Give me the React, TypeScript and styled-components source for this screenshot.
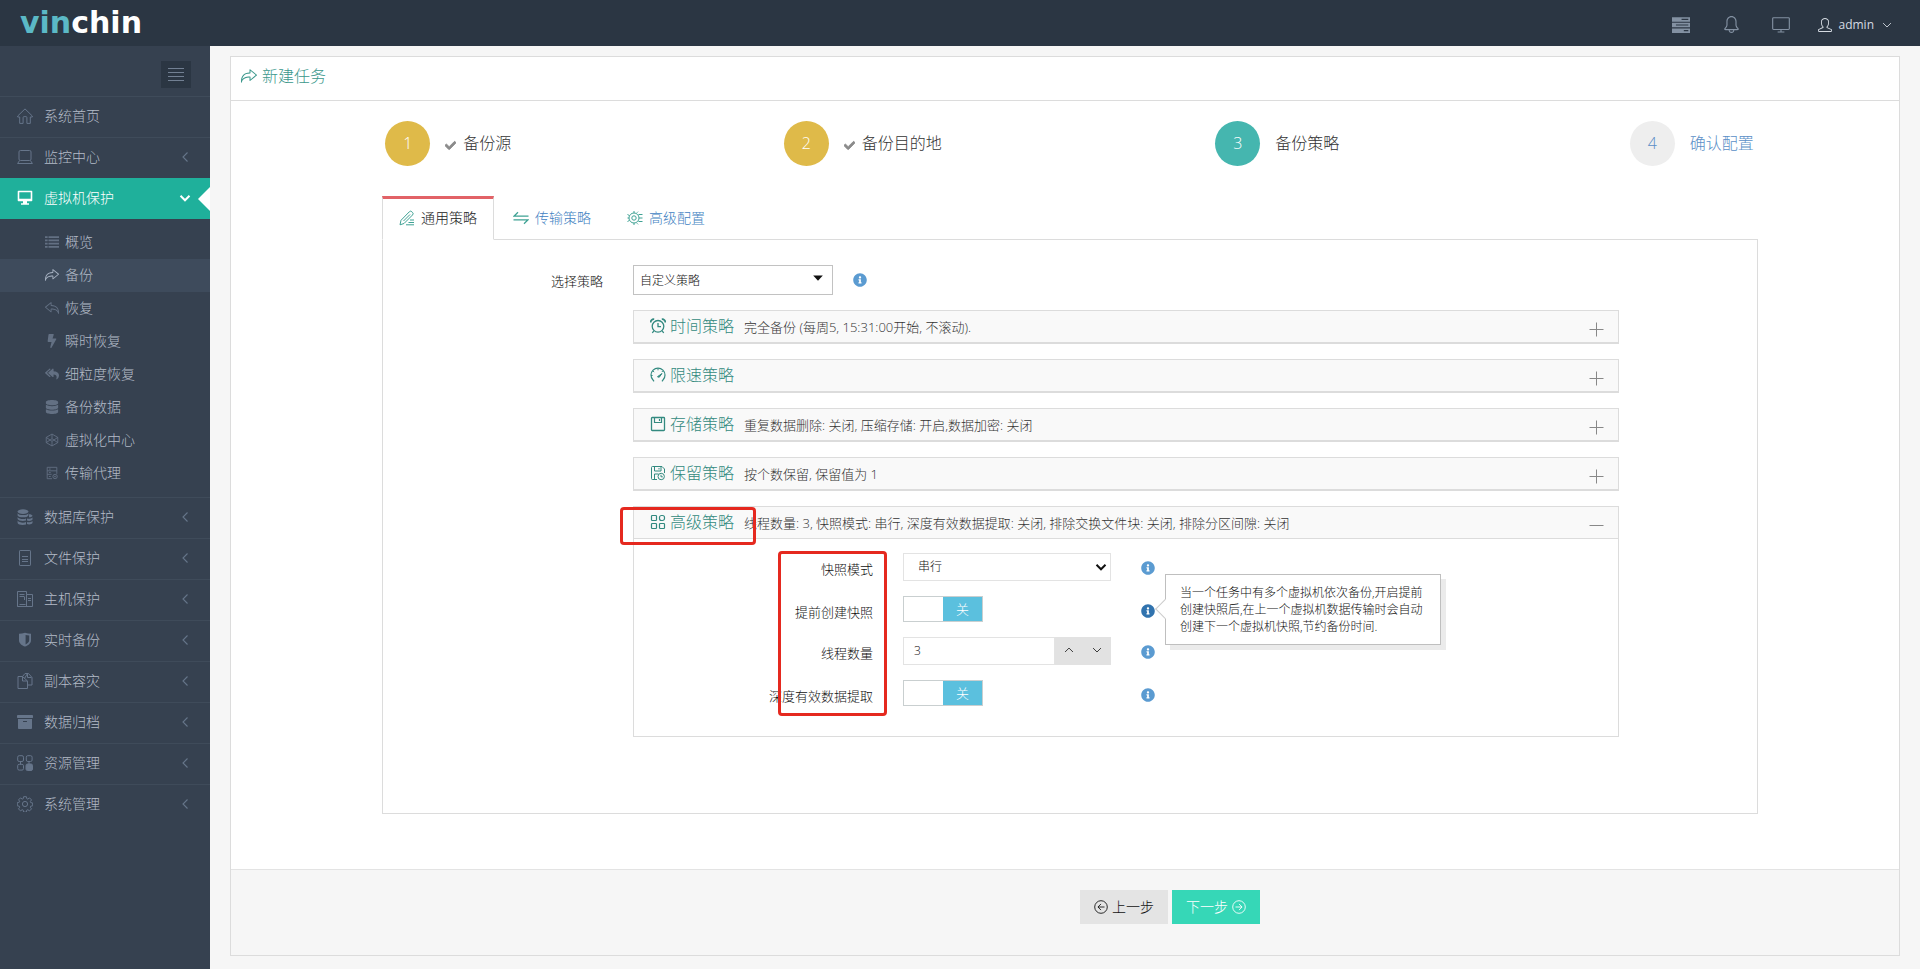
import React from 'react';
import styled, { createGlobalStyle, css } from 'styled-components';
import { FaArchive, FaBolt, FaCheck, FaDatabase, FaInfoCircle, FaReplyAll } from 'react-icons/fa';
import { SlActionRedo, SlActionUndo, SlBell, SlUser } from 'react-icons/sl';

const GlobalStyle = createGlobalStyle`
  *, *::before, *::after { box-sizing: border-box; }
  body {
    margin: 0;
    background: #f6f6f6;
    color: #111;
    font-family: "Open Sans", "Noto Sans CJK SC", sans-serif;
    font-size: 13px;
    line-height: 20px;
    font-weight: 300;
  }
  a { color: inherit; text-decoration: none; }
  button, input, select { font: inherit; color: inherit; margin: 0; border-radius: 0; }
  button { cursor: pointer; }
  ul, ol { list-style: none; margin: 0; padding: 0; }
  h1, h2, p { margin: 0; font-weight: inherit; }
`;

/* ---------- icons ---------- */

const Svg = styled.svg<{ $size?: number; $bold?: boolean }>`
  display: block;
  flex: none;
  width: ${(p) => p.$size ?? 16}px;
  height: ${(p) => p.$size ?? 16}px;
  fill: none;
  stroke: currentColor;
  stroke-width: ${(p) => (p.$bold ? 2 : 1)};
`;

const shapes = {
  menu: <path d="M0 1.5h16M0 5.5h16M0 9.5h16M0 13.5h16" />,
  list: <path d="M0 2.5h3M4 2.5h12M0 6.2h3M4 6.2h12M0 9.900h3M4 9.900h12M0 13.600h3M4 13.600h12" strokeWidth="2" />,
  home: <path d="M.7 8 8 .9 15.3 8v1h-2v6.4h-3.400V9.600a1 1 0 0 0-1-1H7.100a1 1 0 0 0-1 1v5.800H2.700V9h-2z" strokeLinejoin="round" />,
  laptop: (
    <>
      <rect x="2" y="1.5" width="12" height="10" rx="1.4" />
      <path d="M2.6 11.5.6 14.5h14.8l-2-3" />
    </>
  ),
  monitor: (
    <path
      d="M1.5.8h13c.5 0 .8.3.8.8v8.8c0 .5-.3.8-.8.8H10v2h2v1.6H4v-1.6h2v-2H1.5c-.5 0-.8-.3-.8-.8V1.600C.7 1.100 1 .8 1.500.8zM2.300 2.300v6.400h11.400V2.300z"
      fill="currentColor"
      fillRule="evenodd"
      stroke="none"
    />
  ),
  cube: (
    <>
      <path d="M8 1.2 14.6 5v6L8 14.800 1.400 11V5z" />
      <path d="M1.400 5 8 9.500 14.600 5M1.400 11 8 6.500l6.600 4.500M8 1.200v5.300M8 9.500v5.300" />
    </>
  ),
  agent: (
    <>
      <path d="M8 14.500H2.500v-13h11v7.500M2.500 5.500h11M2.500 9.500h5M4.500 3.500h2M4.500 7.500h2M4.500 12h2" />
      <circle cx="11.500" cy="12" r="2.500" />
      <circle cx="11.500" cy="12" r=".6" />
    </>
  ),
  databases: (
    <g fill="currentColor" stroke="none">
      <ellipse cx="6" cy="2.600" rx="5.400" ry="2.400" />
      <path d="M.6 4.200c1 2.500 9.800 2.500 10.800 0v2.200c-1 2.500-9.800 2.500-10.800 0zM.6 7.900c1 2.200 6.400 2.500 8.400 1.500v2.200c-2.800.9-7.700.4-8.400-1.500zM.6 11.600c1 2.200 6.400 2.500 8.400 1.500v2.300c-2.800.9-7.700.6-8.400-1.500z" />
      <path d="M12 5.300c1.800 0 3.500.6 3.500 1.500S14 8.300 12 8.300zM10 9.500c2 .6 5 .2 5.500-1.200v2.200c-.5 1.400-3.500 1.700-5.500 1.100zM10 13c2 .6 5 .2 5.500-1.200V14c-.5 1.400-3.500 1.700-5.500 1.100z" />
    </g>
  ),
  file: (
    <>
      <rect x="2.500" y=".5" width="11" height="15" rx=".6" />
      <path d="M5 6.500h6M5 9.500h6M5 11.500h6" />
    </>
  ),
  host: (
    <>
      <path d="M9.500 15.500h-9V.5h9v3M.5 15.500h15v-12h-6M2.500 3.500h5M2.500 5.500h5M2.500 13.500h6M9.500 3.500v12M11 7.500h3M11 9.500h3" />
      <path d="M7.500 6v3" />
    </>
  ),
  shield: (
    <path
      d="M8 .8c2 .6 4 1 6 1v6.400c0 3.200-2.800 5.200-6 6.400-3.200-1.200-6-3.200-6-6.400V1.800c2 0 4-.4 6-1zM8.600 3v9.400c2.200-1 3.600-2.400 3.600-4.400V3.400c-1.200 0-2.400-.1-3.600-.4z"
      fill="currentColor"
      fillRule="evenodd"
      stroke="none"
    />
  ),
  copy: <path d="M5.500 3.500 8 .5h3.500l3.500 4v7.500h-4.500M1 3.500h4.500L10.500 8v7.500H1zM5.500 3.500V8h5M7.500 5.500l3-5v4h4" />,
  grid: (
    <>
      <rect x=".7" y=".7" width="5.800" height="5.800" rx="1.500" />
      <rect x="9.300" y=".7" width="5.800" height="5.800" rx="1.500" />
      <rect x=".7" y="9.300" width="5.800" height="5.800" rx="1.500" />
      <rect x="9" y="9" width="6.500" height="6.500" rx="1.500" fill="currentColor" />
      <path d="M3.500 6.500v3M12 6.500v3" />
    </>
  ),
  gear: (
    <>
      <path d="M6.600.7h2.800l.4 2 1 .4 1.700-1.200 2 2-1.200 1.700.4 1 2 .4v2.800l-2 .4-.4 1 1.200 1.700-2 2-1.700-1.200-1 .4-.4 2H6.600l-.4-2-1-.4-1.700 1.200-2-2 1.200-1.700-.4-1-2-.4V6.600l2-.4.4-1L1.500 3.900l2-2 1.700 1.200 1-.4z" strokeLinejoin="round" />
      <circle cx="8" cy="8" r="2.600" />
    </>
  ),
  server: (
    <>
      <path d="M0 1h16v4H0zM0 6h16v4H0zM0 11h16v4H0z" fill="currentColor" stroke="none" />
      <path d="M8.500 3h6M3.500 8h11M10.500 13h4" stroke="#2b3643" />
    </>
  ),
  screen: (
    <>
      <rect x=".6" y="1.500" width="14.800" height="10.500" rx=".8" />
      <path d="M8 12v2M5 14.200h6" />
    </>
  ),
  pencil: (
    <path
      d="M1 14.800l1-4.500L10.300 1.800a1.800 1.800 0 0 1 2.600 0l.6.6a1.800 1.800 0 0 1 0 2.600L5 13.500 1 14.800M4.500 11 11 4.500M11 10h4M9.500 12.500H15M7 14.800h8"
      strokeLinejoin="round"
    />
  ),
  transfer: <path d="M15.500 6.200H1L5 2.300M.5 9.800H15l-4 3.900" strokeWidth="1.200" />,
  config: (
    <>
      <circle cx="7" cy="8" r="5" />
      <circle cx="7" cy="8" r="2.200" />
      <path d="M7 1v2M7 13v2M.5 4.500l1.800 1M.5 11.500l1.800-1M.5 8H2M10 2.700l1-1M10 13.300l1 1M11.500 4.500h4M12 8h3.500M11.500 11.500h4" />
    </>
  ),
  clock: (
    <>
      <circle cx="8" cy="8.300" r="5.800" strokeWidth="1.300" />
      <path d="M8 5v3.600h3M3.800 12.800 2.300 15M12.200 12.800l1.500 2.200" strokeWidth="1.300" />
      <path d="M.6 4.500C.6 2.500 2 1 4.200 1.200M15.400 4.500c0-2-1.400-3.500-3.600-3.300" strokeWidth="1.800" />
    </>
  ),
  speed: (
    <>
      <path d="M4 14.300 3 13A7 7 0 1 1 13 13l-1 1.300" strokeWidth="1.200" />
      <path d="M8 1.500v1.800M3 4l1.200 1M1 8.500h1.600M12.800 4l-1 1" />
      <path d="M7.500 9.700 12 6.500 9.200 10.300z" fill="currentColor" />
    </>
  ),
  disk: (
    <>
      <rect x="1.500" y="1.500" width="13" height="13" rx=".8" strokeWidth="1.300" />
      <path d="M4.500 1.500v5h7v-5M9.500 3v2" strokeWidth="1.200" />
    </>
  ),
  diskClock: (
    <>
      <path d="M7 14.500H2.500a1 1 0 0 1-1-1v-11a1 1 0 0 1 1-1H12L14.500 4v4M4.500 1.500v4.500h6.500V1.500M9 3v1.500M4.500 14.500V9h4" />
      <circle cx="11.200" cy="11.500" r="3.200" />
      <path d="M11 9.800v2h1.800" />
    </>
  ),
  apps: (
    <>
      <rect x="1.500" y="1.500" width="5" height="5" rx=".8" strokeWidth="1.200" />
      <rect x="9.500" y="1.500" width="5" height="5" rx="2" strokeWidth="1.200" />
      <rect x="1.500" y="9.500" width="5" height="5" rx=".8" strokeWidth="1.200" />
      <rect x="9.500" y="9.500" width="5" height="5" rx=".8" strokeWidth="1.200" />
    </>
  ),
  plus: <path d="M1.500 8.500h14M8.500 1.500v14" />,
  minus: <path d="M1.500 8.500h14" />,
  left: <path d="M10.500 3.500 6 8l4.500 4.500" strokeWidth="1.100" />,
  down: <path d="M3.500 5.800 8 10.300l4.500-4.500" />,
  up: <path d="M3.500 10.300 8 5.800l4.500 4.500" />,
  caret: <path d="M2.500 5h11L8 11z" fill="currentColor" stroke="none" />,
  backCircle: (
    <>
      <circle cx="8" cy="8" r="7.200" />
      <path d="M12 8H4.500M8 4.500 4.500 8 8 11.500" />
    </>
  ),
  nextCircle: (
    <>
      <circle cx="8" cy="8" r="7.200" />
      <path d="M4 8h7.500M8 4.500 11.500 8 8 11.500" />
    </>
  ),
};

type IconName = keyof typeof shapes;

const Icon = ({ name, size, bold }: { name: IconName; size?: number; bold?: boolean }) => (
  <Svg $size={size} $bold={bold} viewBox="0 0 16 16" aria-hidden="true">
    {shapes[name]}
  </Svg>
);

/* ---------- header ---------- */

const Page = styled.div`
  display: flex;
  flex-direction: column;
  min-height: 100vh;
`;

const Header = styled.header`
  display: flex;
  align-items: center;
  justify-content: space-between;
  height: 46px;
  padding: 0 26px 0 20px;
  background: #2b3643;
`;

const Logo = styled.a`
  font: 700 30px/46px "DejaVu Sans", sans-serif;
  color: #fff;
  span { color: #5bb9c6; }
`;

const HeaderActions = styled.div`
  display: flex;
  align-items: center;
  gap: 28px;
  padding-top: 3px;
`;

const HeaderIcons = styled.div`
  display: flex;
  gap: 32px;
`;

const HeaderButton = styled.button`
  display: flex;
  justify-content: center;
  width: 18px;
  padding: 0;
  border: 0;
  background: none;
  color: #8391a2;
`;

const UserButton = styled.button`
  display: flex;
  align-items: center;
  gap: 6px;
  padding: 0;
  border: 0;
  background: none;
  color: #d5dbe2;
  font-size: 12px;
  font-weight: 400;
`;

/* ---------- sidebar ---------- */

const Main = styled.div`
  display: flex;
  flex: 1;
`;

const Sidebar = styled.nav`
  flex: none;
  width: 210px;
  background: #364150;
  color: #b4bcc8;
`;

const SidebarTop = styled.div`
  display: flex;
  justify-content: flex-end;
  height: 50px;
  padding: 15px 19px 0 0;
`;

const Toggler = styled.button`
  display: grid;
  place-items: center;
  width: 30px;
  height: 27px;
  padding: 0;
  border: 0;
  background: #2b3643;
  color: #728093;
`;

const MenuLink = styled.a<{ $active?: boolean }>`
  position: relative;
  display: flex;
  align-items: center;
  height: 41px;
  padding: 0 17px 2px;
  border-top: 1px solid #3f4b5a;
  font-size: 14px;
  color: ${(p) => (p.$active ? '#fff' : '#b4bcc8')};
  > svg { color: ${(p) => (p.$active ? '#fff' : '#66758a')}; }
  > svg:first-child { margin-right: 11px; }
  > span { flex: 1; }
  ${(p) =>
    p.$active &&
    css`
      background: #1fb09b;
      border-color: #1fb09b;
      &::after {
        content: '';
        position: absolute;
        right: 0;
        top: 8px;
        border: solid transparent;
        border-width: 12px 12px 12px 0;
        border-right-color: #fff;
      }
    `}
`;

const SubMenu = styled.ul`
  padding: 7px 0;
`;

const SubLink = styled.a<{ $active?: boolean }>`
  display: flex;
  align-items: center;
  gap: 6px;
  height: 33px;
  padding: 0 0 2px 45px;
  font-size: 14px;
  background: ${(p) => (p.$active ? '#3e4b5c' : 'transparent')};
  > svg { flex: none; width: 14px; height: 14px; color: ${(p) => (p.$active ? '#a7b2c2' : '#637083')}; }
`;

const menuTop: { icon: IconName; label: string; leaf?: boolean; active?: boolean }[] = [
  { icon: 'home', label: '系统首页', leaf: true },
  { icon: 'laptop', label: '监控中心' },
  { icon: 'monitor', label: '虚拟机保护', active: true },
];

const subMenu = [
  { icon: <Icon name="list" />, label: '概览' },
  { icon: <SlActionRedo />, label: '备份', active: true },
  { icon: <SlActionUndo />, label: '恢复' },
  { icon: <FaBolt />, label: '瞬时恢复' },
  { icon: <FaReplyAll />, label: '细粒度恢复' },
  { icon: <FaDatabase />, label: '备份数据' },
  { icon: <Icon name="cube" />, label: '虚拟化中心' },
  { icon: <Icon name="agent" />, label: '传输代理' },
];

const menuBottom: { icon: IconName | 'archive'; label: string }[] = [
  { icon: 'databases', label: '数据库保护' },
  { icon: 'file', label: '文件保护' },
  { icon: 'host', label: '主机保护' },
  { icon: 'shield', label: '实时备份' },
  { icon: 'copy', label: '副本容灾' },
  { icon: 'archive', label: '数据归档' },
  { icon: 'grid', label: '资源管理' },
  { icon: 'gear', label: '系统管理' },
];

/* ---------- card and wizard steps ---------- */

const Content = styled.main`
  flex: 1;
  min-width: 0;
  padding: 10px 20px 12px;
`;

const Card = styled.section`
  border: 1px solid #dcdcdc;
  background: #fff;
`;

const CardTitle = styled.h1`
  display: flex;
  align-items: center;
  gap: 5px;
  height: 44px;
  padding: 0 10px 6px;
  border-bottom: 1px solid #dcdcdc;
  font-size: 16px;
  color: #3a978b;
`;

const Steps = styled.ol`
  display: flex;
  padding: 20px 0 30px 10px;
`;

type StepState = 'done' | 'active' | 'todo';

const Step = styled.li<{ $state: StepState }>`
  display: flex;
  flex: 1;
  align-items: center;
  justify-content: center;
  gap: 15px;
  font-size: 16px;
  color: ${(p) => (p.$state === 'todo' ? '#5b8fc7' : '#333')};
`;

const StepNumber = styled.span<{ $state: StepState }>`
  display: grid;
  place-items: center;
  width: 45px;
  height: 45px;
  padding-bottom: 1px;
  border-radius: 50%;
  color: ${(p) => (p.$state === 'todo' ? '#5b8fc7' : '#fff')};
  background: ${(p) => ({ done: '#dfba49', active: '#45b6af', todo: '#eee' })[p.$state]};
`;

const StepLabel = styled.span`
  display: flex;
  align-items: center;
  gap: 7px;
  padding-bottom: 1px;
  svg { width: 11px; height: 11px; margin-top: 4px; color: #8b8b8b; stroke: #8b8b8b; stroke-width: 40px; }
`;

const steps: { label: string; state: StepState }[] = [
  { label: '备份源', state: 'done' },
  { label: '备份目的地', state: 'done' },
  { label: '备份策略', state: 'active' },
  { label: '确认配置', state: 'todo' },
];

/* ---------- tabs ---------- */

const Tabbed = styled.div`
  padding: 0 141px 55px 151px;
`;

const Tabs = styled.div`
  position: relative;
  z-index: 1;
  display: flex;
  gap: 2px;
  margin-bottom: -1px;
`;

const Tab = styled.button<{ $active?: boolean }>`
  display: flex;
  align-items: center;
  justify-content: center;
  gap: 6px;
  min-width: 112px;
  height: 44px;
  padding: 0 16px 2px;
  border: 1px solid transparent;
  border-top-width: 3px;
  background: none;
  font-size: 14px;
  color: #3f82c2;
  svg { color: #3fa294; }
  ${(p) =>
    p.$active &&
    css`
      border-color: #e26267 #dcdcdc transparent;
      background: #fff;
      color: #222;
    `}
`;

const Pane = styled.div`
  display: grid;
  grid-template-columns: 220px 1fr;
  gap: 15px 30px;
  padding: 25px 138px 76px 0;
  border: 1px solid #dcdcdc;
`;

const FieldLabel = styled.label`
  padding-top: 6px;
  text-align: right;
`;

const Inline = styled.div`
  display: flex;
  gap: 20px;
`;

const SelectBox = styled.div<{ $dark?: boolean }>`
  position: relative;
  width: ${(p) => (p.$dark ? 200 : 208)}px;
  select {
    display: block;
    width: 100%;
    height: ${(p) => (p.$dark ? 30 : 28)}px;
    padding: ${(p) => (p.$dark ? '2px 20px 0 6px' : '0 20px 0 14px')};
    border: 1px solid ${(p) => (p.$dark ? '#c2c2c2' : '#e3e3e3')};
    background: #fff;
    font-size: 12px;
    appearance: none;
  }
  svg {
    position: absolute;
    right: ${(p) => (p.$dark ? 8 : 2)}px;
    top: 6px;
    color: #111;
    pointer-events: none;
  }
`;

const InfoButton = styled.button<{ $hot?: boolean }>`
  display: flex;
  width: 14px;
  height: 14px;
  padding: 0;
  border: 0;
  background: none;
  color: ${(p) => (p.$hot ? '#3173ae' : '#5b9bd1')};
  svg { width: 14px; height: 14px; }
`;

const InfoSlot = styled.div`
  position: relative;
  padding-top: 8px;
`;

/* ---------- strategy panels ---------- */

const Panels = styled.div`
  grid-column: 2;
  display: flex;
  flex-direction: column;
  gap: 15px;
`;

const Panel = styled.section`
  position: relative;
  border: 1px solid #dcdcdc;
`;

const PanelHeader = styled.button`
  display: flex;
  align-items: center;
  width: 100%;
  height: 32px;
  padding: 0 14px 0 16px;
  border: 0;
  border-bottom: 1px solid #dcdcdc;
  background: #f9f9f9;
  text-align: left;
  > svg { color: #888; margin-top: 5px; }
`;

const PanelTitle = styled.h2`
  display: flex;
  align-items: center;
  gap: 4px;
  padding-bottom: 2px;
  font-size: 16px;
  color: #338a80;
`;

const PanelSummary = styled.p`
  flex: 1;
  padding-left: 10px;
  color: #333;
`;

const PanelBody = styled.div`
  display: flex;
  flex-direction: column;
  gap: 15px;
  padding: 14px 0 30px;
`;

const Row = styled.div`
  display: grid;
  grid-template-columns: 239px 208px auto;
  gap: 30px;
`;

const Switch = styled.span`
  position: relative;
  display: grid;
  grid-template-columns: 1fr 1fr;
  width: 80px;
  height: 26px;
  border: 1px solid #c9cfd0;
  background: #fff;
  input { position: absolute; inset: 0; width: 100%; height: 100%; margin: 0; opacity: 0; cursor: pointer; }
  span { grid-column: 2; background: #5bc0de; color: #fff; text-align: center; line-height: 24px; }
`;

const Spinner = styled.div`
  display: flex;
  height: 28px;
  input { flex: 1; min-width: 0; padding: 0 10px; border: 1px solid #e3e3e3; background: #fff; font-size: 12px; }
  button { display: grid; place-items: center; width: 28px; padding: 0 0 2px; border: 0; background: #e2e2e2; color: #222; }
`;

const Tooltip = styled.div`
  position: absolute;
  z-index: 2;
  left: 24px;
  top: -22px;
  width: 276px;
  padding: 9px 14px;
  border: 1px solid #bfbfbf;
  background: #fff;
  box-shadow: 5px 5px #ebebeb;
  font-size: 12px;
  line-height: 17px;
  &::before {
    content: '';
    position: absolute;
    left: -8px;
    top: 27px;
    width: 14px;
    height: 14px;
    border: solid #ccc;
    border-width: 0 0 1px 1px;
    background: #fff;
    transform: rotate(45deg);
  }
  span { position: relative; display: block; white-space: pre; }
`;

const Marker = styled.div<{ $kind: 'title' | 'labels' }>`
  position: absolute;
  z-index: 3;
  border: 3px solid #e5291f;
  border-radius: 4px;
  pointer-events: none;
  ${(p) =>
    p.$kind === 'title'
      ? css`left: -14px; top: 0; width: 136px; height: 38px;`
      : css`left: 144px; top: 44px; width: 109px; height: 165px;`}
`;

const Actions = styled.footer`
  display: flex;
  gap: 4px;
  height: 86px;
  padding: 20px 0 0 calc(50% + 15px);
  border-top: 1px solid #e3e3e3;
  background: #f6f6f6;
`;

const ActionButton = styled.button<{ $primary?: boolean }>`
  display: flex;
  align-items: center;
  justify-content: center;
  gap: 4px;
  width: 88px;
  height: 34px;
  padding: 0;
  border: 0;
  font-size: 14px;
  background: ${(p) => (p.$primary ? '#36d7b7' : '#e4e4e4')};
  color: ${(p) => (p.$primary ? '#fff' : '#111')};
`;

const panels: { icon: IconName; title: string; summary: string }[] = [
  { icon: 'clock', title: '时间策略', summary: '完全备份 (每周5, 15:31:00开始, 不滚动).' },
  { icon: 'speed', title: '限速策略', summary: '' },
  { icon: 'disk', title: '存储策略', summary: '重复数据删除: 关闭, 压缩存储: 开启,数据加密: 关闭' },
  { icon: 'diskClock', title: '保留策略', summary: '按个数保留, 保留值为 1' },
];

const tipText =
  '当一个任务中有多个虚拟机依次备份,开启提前\n创建快照后,在上一个虚拟机数据传输时会自动\n创建下一个虚拟机快照,节约备份时间.';

const Info = ({ tip }: { tip?: string }) => (
  <InfoSlot>
    <InfoButton type="button" aria-label="说明" $hot={!!tip}>
      <FaInfoCircle />
    </InfoButton>
    {tip && (
      <Tooltip role="tooltip">
        <span>{tip}</span>
      </Tooltip>
    )}
  </InfoSlot>
);

const SwitchField = ({ id, label, tip }: { id: string; label: string; tip?: string }) => (
  <Row>
    <FieldLabel htmlFor={id}>{label}</FieldLabel>
    <Switch>
      <input id={id} type="checkbox" />
      <span>关</span>
    </Switch>
    <Info tip={tip} />
  </Row>
);

export default function App() {
  return (
    <>
      <GlobalStyle />
      <Page>
        <Header>
          <Logo href="#">
            <span>vin</span>chin
          </Logo>
          <HeaderActions>
            <HeaderIcons>
              <HeaderButton type="button" aria-label="任务"><Icon name="server" size={18} /></HeaderButton>
              <HeaderButton type="button" aria-label="通知"><SlBell size={17} /></HeaderButton>
              <HeaderButton type="button" aria-label="监控"><Icon name="screen" size={18} /></HeaderButton>
            </HeaderIcons>
            <UserButton type="button">
              <SlUser size={14} />
              admin
              <Icon name="down" size={14} />
            </UserButton>
          </HeaderActions>
        </Header>
        <Main>
          <Sidebar>
            <SidebarTop>
              <Toggler type="button" aria-label="菜单"><Icon name="menu" /></Toggler>
            </SidebarTop>
            <ul>
              {menuTop.map((m) => (
                <li key={m.label}>
                  <MenuLink href="#" $active={m.active}>
                    <Icon name={m.icon} />
                    <span>{m.label}</span>
                    {!m.leaf && <Icon name={m.active ? 'down' : 'left'} bold={m.active} />}
                  </MenuLink>
                  {m.active && (
                    <SubMenu>
                      {subMenu.map((s) => (
                        <li key={s.label}>
                          <SubLink href="#" $active={s.active}>
                            {s.icon}
                            {s.label}
                          </SubLink>
                        </li>
                      ))}
                    </SubMenu>
                  )}
                </li>
              ))}
              {menuBottom.map((m) => (
                <li key={m.label}>
                  <MenuLink href="#">
                    {m.icon === 'archive' ? <FaArchive size={16} /> : <Icon name={m.icon} />}
                    <span>{m.label}</span>
                    <Icon name="left" />
                  </MenuLink>
                </li>
              ))}
            </ul>
          </Sidebar>
          <Content>
            <Card>
              <CardTitle>
                <SlActionRedo size={16} />
                新建任务
              </CardTitle>
              <Steps>
                {steps.map((s, i) => (
                  <Step key={s.label} $state={s.state}>
                    <StepNumber $state={s.state}>{i + 1}</StepNumber>
                    <StepLabel>
                      {s.state === 'done' && <FaCheck />}
                      {s.label}
                    </StepLabel>
                  </Step>
                ))}
              </Steps>
              <Tabbed>
                <Tabs role="tablist">
                  <Tab type="button" role="tab" aria-selected="true" $active>
                    <Icon name="pencil" />通用策略
                  </Tab>
                  <Tab type="button" role="tab">
                    <Icon name="transfer" />传输策略
                  </Tab>
                  <Tab type="button" role="tab">
                    <Icon name="config" />高级配置
                  </Tab>
                </Tabs>
                <Pane role="tabpanel">
                  <FieldLabel htmlFor="policy">选择策略</FieldLabel>
                  <Inline>
                    <SelectBox $dark>
                      <select id="policy">
                        <option>自定义策略</option>
                      </select>
                      <Icon name="caret" size={14} />
                    </SelectBox>
                    <Info />
                  </Inline>
                  <Panels>
                    {panels.map((p) => (
                      <Panel key={p.title}>
                        <PanelHeader type="button" aria-expanded="false">
                          <PanelTitle>
                            <Icon name={p.icon} />
                            {p.title}
                          </PanelTitle>
                          <PanelSummary>{p.summary}</PanelSummary>
                          <Icon name="plus" />
                        </PanelHeader>
                      </Panel>
                    ))}
                    <Panel>
                      <PanelHeader type="button" aria-expanded="true">
                        <PanelTitle>
                          <Icon name="apps" />
                          高级策略
                        </PanelTitle>
                        <PanelSummary>
                          线程数量: 3, 快照模式: 串行, 深度有效数据提取: 关闭, 排除交换文件块: 关闭, 排除分区间隙: 关闭
                        </PanelSummary>
                        <Icon name="minus" />
                      </PanelHeader>
                      <PanelBody>
                        <Row>
                          <FieldLabel htmlFor="snapshot">快照模式</FieldLabel>
                          <SelectBox>
                            <select id="snapshot">
                              <option>串行</option>
                            </select>
                            <Icon name="down" bold />
                          </SelectBox>
                          <Info />
                        </Row>
                        <SwitchField id="presnap" label="提前创建快照" tip={tipText} />
                        <Row>
                          <FieldLabel htmlFor="threads">线程数量</FieldLabel>
                          <Spinner>
                            <input id="threads" type="text" defaultValue="3" />
                            <button type="button" aria-label="增加"><Icon name="up" size={14} /></button>
                            <button type="button" aria-label="减少"><Icon name="down" size={14} /></button>
                          </Spinner>
                          <Info />
                        </Row>
                        <SwitchField id="deep" label="深度有效数据提取" />
                      </PanelBody>
                      <Marker $kind="title" />
                      <Marker $kind="labels" />
                    </Panel>
                  </Panels>
                </Pane>
              </Tabbed>
              <Actions>
                <ActionButton type="button">
                  <Icon name="backCircle" size={14} />
                  上一步
                </ActionButton>
                <ActionButton type="button" $primary>
                  下一步
                  <Icon name="nextCircle" size={14} />
                </ActionButton>
              </Actions>
            </Card>
          </Content>
        </Main>
      </Page>
    </>
  );
}
